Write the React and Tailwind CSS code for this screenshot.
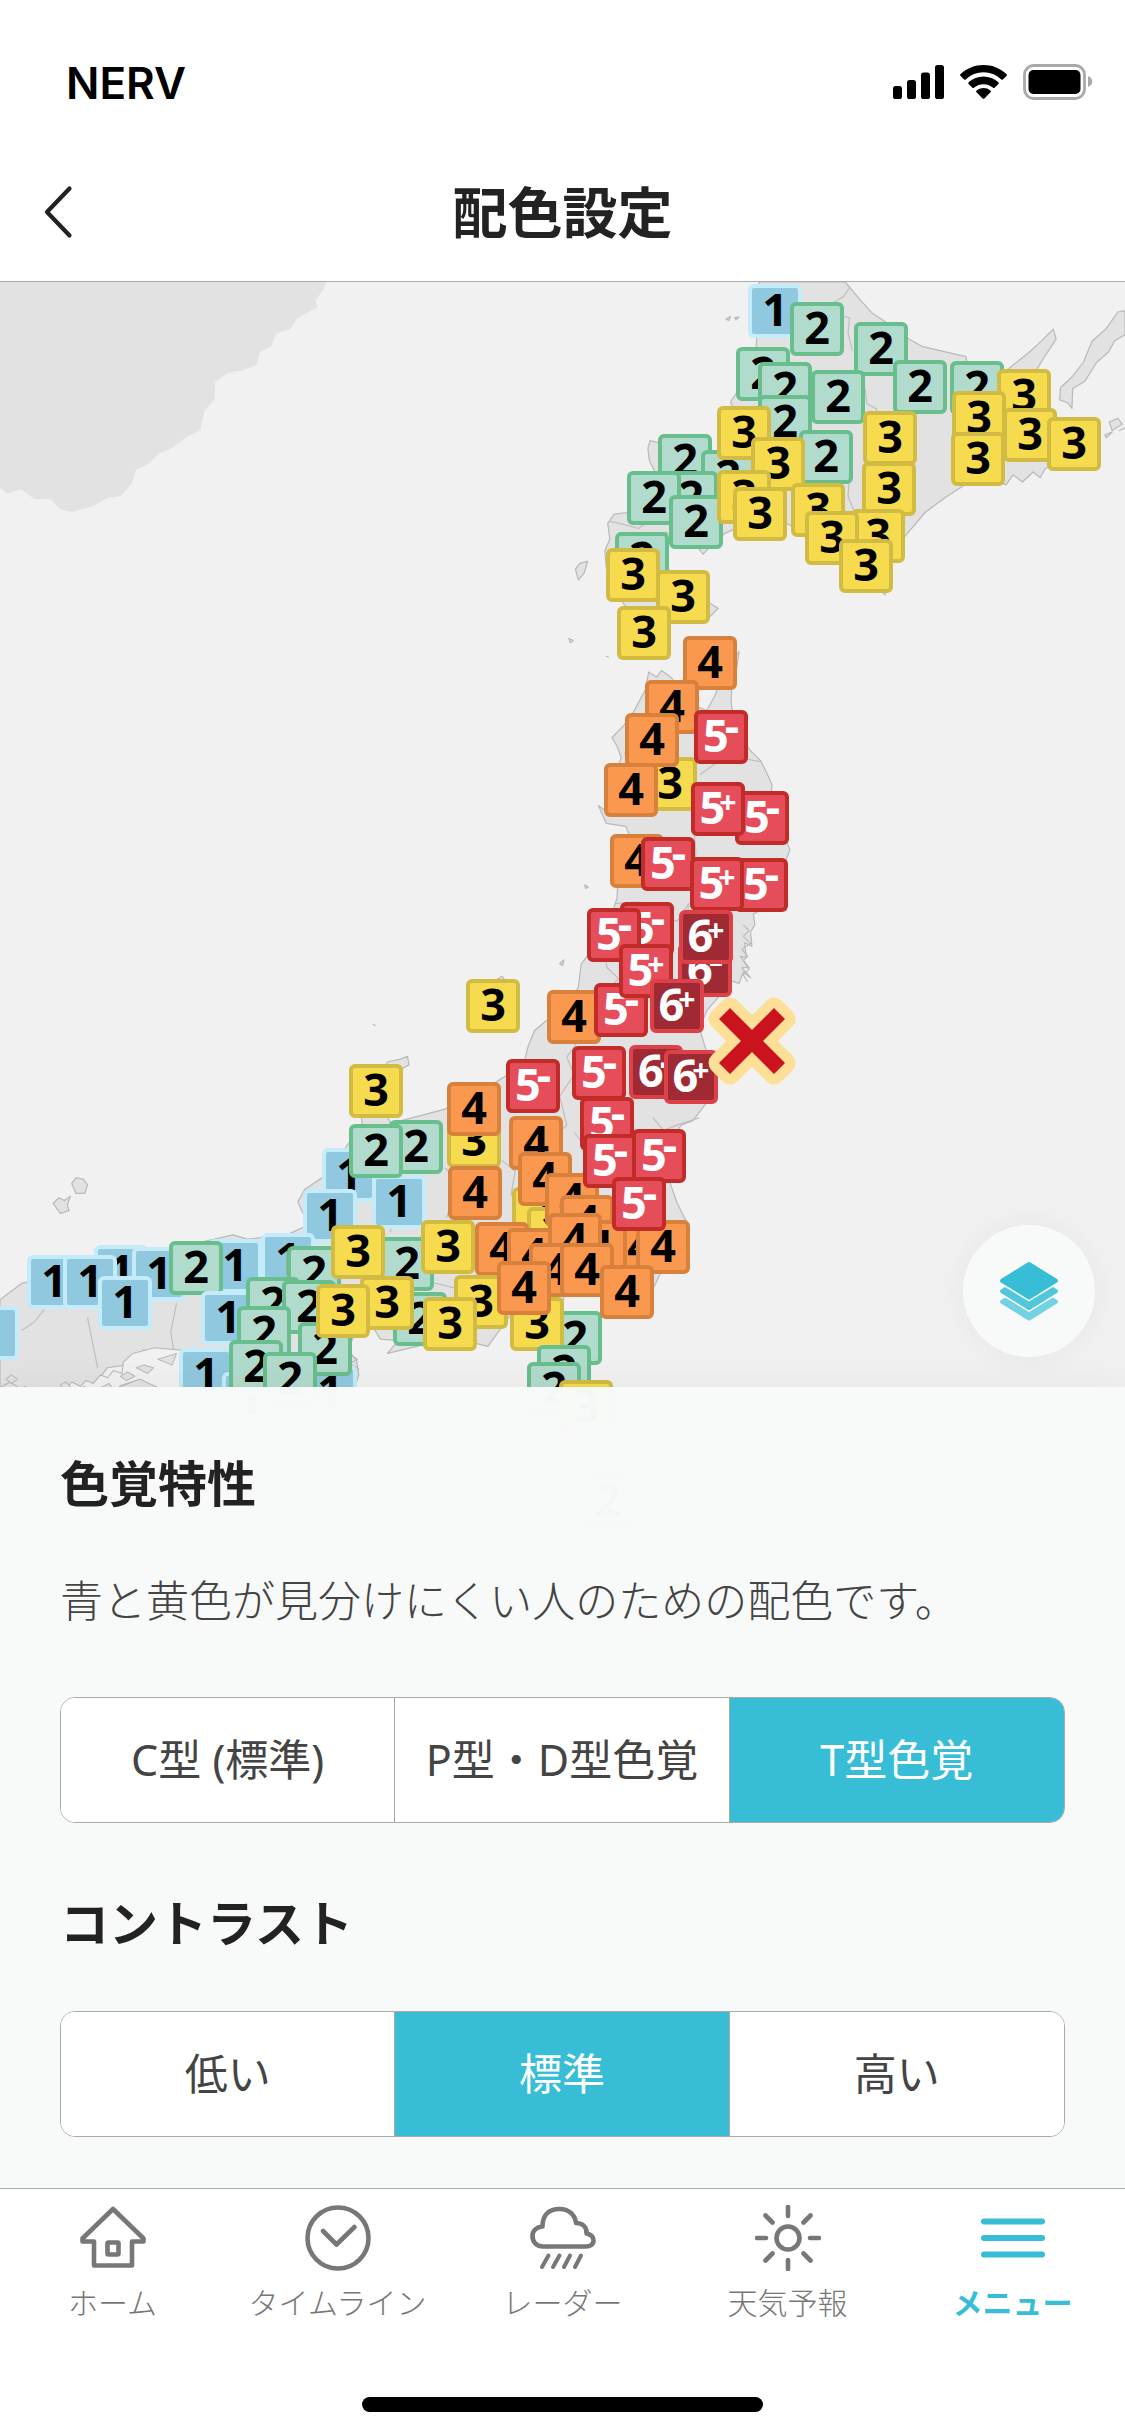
import { useState } from "react";

const TILE_STYLES = {
  1: "bg-[#90c8df] border-[#c3ebfa] text-black",
  2: "bg-[#b1dbcd] border-[#68be8d] text-black",
  3: "bg-[#f5db4d] border-[#d2bb43] text-black",
  4: "bg-[#fa9850] border-[#d7813c] text-black",
  5: "bg-[#e64d5b] border-[#c12b28] text-white",
  6: "bg-[#a02a33] border-[#dd4046] text-white",
};

// Seismic intensity readings in drawing order: [intensity, x, y] in map pixels.
const READINGS = [
  ["1", 748, 2], ["2", 736, 65], ["2", 758, 80], ["2", 790, 20], ["2", 854, 40],
  ["2", 811, 88], ["2", 758, 113], ["2", 893, 78], ["2", 950, 79], ["3", 997, 87],
  ["3", 952, 109], ["3", 1003, 126], ["3", 951, 150], ["3", 1047, 135],
  ["2", 658, 152], ["2", 701, 168], ["2", 664, 189], ["2", 627, 189], ["2", 669, 213],
  ["2", 799, 148], ["3", 717, 124], ["3", 751, 155], ["3", 717, 188], ["3", 733, 205],
  ["3", 863, 129], ["3", 862, 180], ["3", 791, 201], ["3", 851, 227], ["3", 805, 229],
  ["3", 839, 257], ["2", 615, 250], ["3", 656, 288], ["3", 606, 266], ["3", 617, 324],
  ["4", 683, 354], ["4", 645, 398], ["3", 643, 475], ["4", 625, 431], ["4", 604, 481],
  ["5-", 694, 428], ["5-", 735, 509], ["5+", 691, 500], ["4", 610, 552], ["5-", 641, 555],
  ["5-", 734, 576], ["5+", 690, 575], ["5-", 620, 620], ["5-", 587, 626],
  ["6-", 678, 661], ["6+", 679, 628], ["4", 547, 708], ["5-", 594, 701],
  ["5+", 619, 662], ["6+", 650, 697], ["3", 466, 697], ["5-", 506, 777],
  ["5-", 572, 764], ["6-", 629, 763], ["6+", 664, 768],
  ["1", 322, 866], ["1", 372, 893], ["2", 389, 838], ["2", 349, 842], ["3", 349, 782],
  ["1", 303, 907], ["3", 447, 832], ["4", 447, 800], ["4", 448, 884],
  ["3", 512, 905], ["3", 527, 925], ["4", 509, 834], ["4", 518, 870], ["4", 545, 891],
  ["4", 560, 913], ["4", 613, 938], ["4", 636, 938], ["4", 573, 938],
  ["4", 475, 940], ["4", 507, 946], ["4", 548, 931],
  ["5-", 580, 815], ["5-", 583, 852], ["5-", 632, 847], ["5-", 612, 895],
  ["1", -35, 1024], ["1", 94, 963], ["1", 27, 973], ["1", 63, 973], ["1", 132, 965],
  ["1", 98, 994], ["1", 208, 957], ["2", 169, 959], ["1", 261, 951], ["1", 201, 1009],
  ["2", 287, 964], ["2", 380, 955], ["3", 331, 943], ["3", 421, 938],
  ["2", 246, 995], ["2", 282, 998], ["2", 237, 1024], ["1", 303, 1083], ["2", 298, 1040],
  ["2", 393, 1010], ["3", 360, 994], ["3", 316, 1002], ["3", 454, 993], ["3", 423, 1015],
  ["2", 548, 1029], ["3", 510, 1015], ["4", 529, 961], ["4", 560, 961],
  ["4", 497, 979], ["4", 600, 983], ["1", 179, 1066], ["1", 222, 1090], ["2", 229, 1058],
  ["2", 263, 1070], ["2", 537, 1063], ["2", 527, 1080], ["3", 559, 1098], ["2", 581, 1192],
];

function Tile({ value, x, y }) {
  const digit = value[0];
  const sign = value[1];
  return (
    <span
      className={`absolute flex h-[54px] w-[54px] justify-center rounded-[6px] border-4 text-[45px] leading-[42px] font-bold ${TILE_STYLES[digit]}`}
      style={{ left: x, top: y }}
    >
      {digit}
      {sign === "-" && <span className="-ml-[4px] leading-[22px]">-</span>}
      {sign === "+" && <span className="-ml-[6px] text-[30px] leading-[32px]">+</span>}
    </span>
  );
}

function Land() {
  return (
    <svg className="absolute top-0 left-0" width="1125" height="1200" viewBox="0 0 1125 1200" fill="none" aria-hidden="true">
      <g transform="scale(.7175 .7143)" strokeLinejoin="round">
        <path fill="#e2e2e2" d="M0 0H455L450 12 440 25 442 36 415 50 404 66 385 72 378 90 362 98 358 116 338 124 318 127 300 140 299 165 285 180 279 208 262 216 240 232 222 240 205 256 190 262 184 282 168 300 150 302 130 314 100 322 84 318 70 304 48 304 30 290 10 296 0 288Z" />
        <g fill="#e2e2e2" stroke="#b9b9b9" strokeWidth="1.7">
          <path d="M1058 0H1178L1198 24 1215 43 1240 60 1258 75 1285 90 1310 96 1340 103 1346 104 1349 118 1380 122 1395 130 1392 160 1400 200 1500 210 1478 248 1456 262 1450 274 1440 266 1425 280 1412 270 1402 284 1385 276 1345 284 1320 300 1290 322 1262 355 1240 390 1228 424 1234 438 1200 410 1172 385 1158 364 1120 350 1090 335 1050 335 1010 352 992 368 980 381 973 372 950 366 928 350 918 362 930 400 950 425 978 440 988 449 1001 457 990 468 975 475 935 478 895 488 880 466 862 440 845 400 843 376 850 360 847 338 856 325 880 322 905 300 915 270 905 250 903 233 906 222 930 228 965 240 1000 242 1017 220 1024 180 1018 168 1030 150 1046 140 1054 90Z" />
          <path d="M1392 132 1410 118 1436 97 1452 82 1468 66 1472 80 1455 106 1446 121 1425 135Z" />
          <path d="M1568 40 1558 42 1542 65 1522 83 1510 112 1495 132 1478 148 1477 165 1488 169 1494 177 1495 149 1512 139 1528 113 1545 98 1554 82 1568 74Z" />
          <path d="M1546 196 1558 191 1564 199 1550 208ZM1540 214 1550 210 1542 218ZM1012 52 1018 48 1016 54ZM1024 50 1030 49 1026 53ZM1568 204 1560 208Z" />
          <path d="M802 402 808 394 819 391 814 408 806 417ZM793 499 799 502 795 505ZM845 524 848 525ZM815 844 820 847 816 849ZM780 954 786 949 784 957ZM520 1039 523 1041ZM692 977 700 972 704 978Z" />
          <path d="M904 546 915 553 922 544 936 554 944 570 960 590 985 600 996 580 1010 545 1030 517 1027 540 1020 555 1019 590 1025 625 1045 655 1060 670 1069 688 1076 704 1072 740 1095 780 1101 795 1093 815 1095 860 1050 885 1052 900 1046 910 1048 930 1038 925 1040 946 1032 944 1044 960 1034 960 1046 974 1036 966 1030 982 1018 978 1004 998 985 1020 975 1045 984 1075 985 1115 984 1150 966 1174 950 1180 934 1200 930 1250 944 1290 958 1318 944 1340 922 1385 905 1420 892 1450 880 1447 868 1425 860 1405 820 1400 795 1395 780 1440 755 1465 735 1440 718 1438 705 1455 680 1490 640 1480 590 1488 540 1500 555 1482 530 1480 512 1450 500 1460 485 1495 497 1510 500 1530 488 1568H250L245 1556 210 1568H330L300 1530 250 1500 200 1495 185 1515 150 1520 130 1545 60 1550 40 1568H0V1425L30 1402 70 1392 110 1378 150 1362 220 1358 290 1342 325 1334 345 1340 400 1334 430 1320 415 1288 425 1270 455 1250 490 1200 505 1180 500 1140 528 1110 540 1092 558 1088 568 1084 570 1096 556 1104 540 1120 530 1150 545 1178 590 1166 620 1158 660 1140 715 1105 730 1095 736 1070 745 1048 790 1010 806 988 810 955 832 925 850 895 860 862 862 820 880 780 872 762 845 758 834 733 846 742 862 730 868 700 860 680 866 666 860 650 853 638 870 620 884 600 900 570Z" />
          <path d="M100 1262 106 1254 116 1256 122 1264 118 1276 106 1276ZM74 1290 82 1282 90 1286 98 1280 94 1292 96 1300 84 1304Z" />
          <path d="M150 1568 165 1548 195 1535 225 1545 240 1568ZM0 1548 14 1540 32 1552 40 1568H0Z" />
        </g>
        <path fill="#f1f1f1" stroke="#b9b9b9" strokeWidth="1.5" d="M185 1500 215 1492 260 1496 330 1505 322 1540 280 1545 250 1568 225 1550 195 1536 168 1545 150 1564 60 1568 66 1558 75 1560 80 1548 90 1552 100 1540 112 1546 120 1538 130 1542 140 1530 150 1534 158 1524 170 1528 172 1512Z" />
        <path stroke="#bcbcbc" strokeWidth="1.500" fill="#e2e2e2" d="M190 1520 200 1516 214 1520 206 1528ZM220 1508 246 1500 240 1516ZM168 1532 178 1526 188 1532 176 1538ZM140 1548 152 1542 158 1550 146 1556ZM104 1552 118 1546 124 1556 110 1562ZM84 1544 92 1540 98 1546 90 1552ZM266 1512 280 1508 290 1514 274 1520ZM8 1536 16 1530 24 1536 16 1542ZM28 1550 36 1546 42 1552 34 1556ZM126 1556 134 1552 138 1560 130 1562Z" />
        <g stroke="#bdbdbd" strokeWidth="1.6">
          <path d="M1184 8 1176 20 1160 30 1166 46 1184 50 1182 72 1188 96M1206 150 1208 170 1222 178 1224 200 1216 214M1170 210 1186 232 1182 300 1190 320M850 335 872 340 890 345 920 322M870 660 900 655 930 670 975 672M975 690 1000 672 1040 668 1062 672M965 740 970 800 962 850M858 870 890 868 920 890 944 895 960 870 950 940 955 990" />
          <path d="M842 940 846 960 862 975 840 1000M808 1060 790 1085 800 1110 780 1140 790 1180 770 1200M910 1170 925 1188 944 1180 975 1170M800 1190 830 1230 815 1260M700 1230 718 1245 712 1280M620 1240 640 1260 622 1310M536 1290 550 1310 544 1330M600 1330 620 1350 600 1370M122 1450 130 1490 136 1520M246 1430 238 1470 242 1495M62 1438 48 1456 30 1468M600 1400 640 1410 630 1430M730 1250 735 1300 720 1340" />
        </g>
        <g stroke="#b9b9b9" strokeWidth="1.5" fill="none">
          <path d="M1036 900 1044 908 1036 916 1046 926 1034 934 1042 944 1036 950 1044 962 1036 970 1042 980M486 1500 498 1508 488 1514 500 1522 486 1530 496 1540M188 1364 200 1358 210 1364 220 1358M740 1330 756 1324 760 1334" />
        </g>
      </g>
    </svg>
  );
}

function Epicenter() {
  const cross = "M-22 -33 0 -11 22 -33 33 -22 11 0 33 22 22 33 0 11 -22 33 -33 22 -11 0 -33 -22Z";
  return (
    <svg className="absolute top-[715px] left-[708px]" width="88" height="88" viewBox="-44 -44 88 88" role="img" aria-label="震源">
      <path d={cross} fill="#fedf98" stroke="#fedf98" strokeWidth="21" strokeLinejoin="round" />
      <path d={cross} fill="#cb131d" />
    </svg>
  );
}

function SeismicMap() {
  return (
    <div className="absolute inset-0 overflow-hidden bg-[#f1f1f1]">
      <Land />
      {READINGS.map(([value, x, y], i) => (
        <Tile key={i} value={value} x={x} y={y} />
      ))}
      <Epicenter />
    </div>
  );
}

function StatusBar() {
  return (
    <div className="flex h-[132px] items-center justify-between pt-[32px] pr-[32px] pl-[66px]">
      <span className="pt-[2px] font-['Inter',sans-serif] text-[44px] leading-[50px] font-semibold text-black">NERV</span>
      <div className="flex items-center gap-[16px]">
        <svg width="51" height="34" viewBox="0 0 51 34" aria-hidden="true">
          <rect x="0" y="21" width="9" height="13" rx="2.6" />
          <rect x="14" y="15" width="9" height="19" rx="2.6" />
          <rect x="28" y="7.500" width="9" height="26.500" rx="2.600" />
          <rect x="42" y="0" width="9" height="34" rx="2.6" />
        </svg>
        <svg width="47" height="34" viewBox="0 0 47 34" aria-hidden="true">
          <path d="M23.500 0C14.600 0 6.600 3.400.6 9a1.400 1.400 0 0 0 0 2l3.300 3.300a1.400 1.400 0 0 0 2 0 25.500 25.500 0 0 1 35.200 0 1.400 1.400 0 0 0 2 0L46.400 11a1.400 1.400 0 0 0 0-2C40.400 3.400 32.400 0 23.500 0Z" />
          <path d="M23.500 11.500c-5.600 0-10.700 2.200-14.700 5.600a1.400 1.400 0 0 0 0 2.100l3.400 3.400a1.400 1.400 0 0 0 2 0 14.200 14.200 0 0 1 18.600 0 1.400 1.400 0 0 0 2 0l3.400-3.400a1.400 1.400 0 0 0 0-2.100c-4-3.400-9.100-5.600-14.700-5.600Z" />
          <path d="M23.500 23c-2.600 0-5 .9-6.900 2.400-.6.500-.6 1.400-.1 1.900l6.100 6.100c.5.500 1.300.5 1.800 0l6.100-6.100c.5-.5.500-1.400-.1-1.900A11 11 0 0 0 23.500 23Z" />
        </svg>
        <svg width="70" height="36" viewBox="0 0 70 36" aria-hidden="true">
          <rect x="1.500" y="1.500" width="60" height="33" rx="9" fill="none" stroke="#a9a9a9" strokeWidth="2.800" />
          <rect x="5.500" y="6" width="52" height="24" rx="5" />
          <path d="M65 12c2.800 1 4.200 3 4.200 5.500S67.800 22 65 23Z" fill="#a9a9a9" />
        </svg>
      </div>
    </div>
  );
}

function Segmented({ labelId, options, initial }) {
  const [selected, setSelected] = useState(initial);
  return (
    <div
      role="group"
      aria-labelledby={labelId}
      className="grid grid-cols-3 divide-x divide-[#aaaaaa] overflow-hidden rounded-[15px] border border-[#aaaaaa] bg-white"
    >
      {options.map((option) => (
        <button
          key={option}
          type="button"
          aria-pressed={selected === option}
          onClick={() => setSelected(option)}
          className={`h-[124px] text-[43px] leading-[60px] ${selected === option ? "bg-[#38bdd6] text-white" : "bg-white text-[#444444]"}`}
        >
          {option}
        </button>
      ))}
    </div>
  );
}

const TABS = [
  {
    label: "ホーム",
    icon: (
      <>
        <path d="M33 4 2.500 33.500V36.500H14V60.500H52V36.500H63.500V33.500Z" />
        <rect x="27.500" y="37.500" width="11" height="12" rx="1" />
      </>
    ),
  },
  {
    label: "タイムライン",
    icon: (
      <>
        <circle cx="33" cy="33" r="30.500" />
        <path d="M18 26 31.500 39.500 49.500 22" />
      </>
    ),
  },
  {
    label: "レーダー",
    icon: (
      <>
        <path d="M13 41.500C6 41.500 2.500 36.500 2.500 31 2.500 25.500 6.500 22 12.500 21.500 12.500 10 19 4 29.500 4 38.500 4 45 9.500 46 18 53 18 57 22.500 56.500 28.500 61 29.500 63.500 32 63.500 35.500 63.500 39.500 60.500 41.500 56 41.500Z" />
        <path strokeWidth="4" d="M18.500 50.500 12 62M29.500 50.500 23 62M40 50.500 34 62M51 50.500 45 62" />
      </>
    ),
  },
  {
    label: "天気予報",
    icon: (
      <>
        <circle cx="33" cy="33" r="11.500" />
        <path d="M33 2V11M33 55V64M2 33H11M55 33H64M10.500 10.500 17.500 17.500M48.500 48.500 55.500 55.500M10.500 55.500 17.500 48.500M48.500 17.500 55.500 10.500" />
      </>
    ),
  },
  { label: "メニュー", active: true, icon: <path strokeWidth="6" d="M4 16.500H62M4 33H62M4 49.500H62" /> },
];

export default function App() {
  return (
    <div className="flex min-h-screen flex-col bg-white font-['Noto_Sans','Noto_Sans_CJK_JP',sans-serif]" lang="ja">
      <header className="border-b border-[#aaaaaa] bg-white">
        <StatusBar />
        <div className="grid h-[149px] grid-cols-[1fr_auto_1fr] items-center pb-[4px]">
          <button type="button" aria-label="戻る" className="flex h-[120px] w-[120px] items-center pt-[14px] pl-[42px]">
            <svg width="32" height="54" viewBox="0 0 32 54" fill="none" stroke="#222" strokeWidth="4.200" strokeLinecap="round" strokeLinejoin="round" aria-hidden="true">
              <path d="M27.500 3.500 5 27 27.500 50.500" />
            </svg>
          </button>
          <h1 className="pt-[14px] text-[55px] leading-[80px] font-bold text-[#222222]">配色設定</h1>
        </div>
      </header>

      <main className="relative flex flex-1 flex-col">
        <SeismicMap />
        <div className="relative flex min-h-[400px] flex-1 items-end justify-end p-[30px]">
          <button
            type="button"
            aria-label="レイヤー"
            className="flex h-[132px] w-[132px] items-center justify-center rounded-full bg-[#f8faf9] shadow-[0_0_30px_rgba(60,50,30,0.06)]"
          >
            <svg width="58" height="59" viewBox="0 0 58 59" aria-hidden="true">
              <path fill="#73d2e2" d="M5 35.500 29 50 53 35.500 57 38Q59 39.500 57 41.500L30.500 58Q29 59 27.500 58L1 41.500Q-1 39.500 1 38Z" />
              <path fill="#52c7db" d="M5 25 29 39.500 53 25 57 27.500Q59 29 57 31L30.500 47.500Q29 48.500 27.500 47.500L1 31Q-1 29 1 27.500Z" />
              <path fill="#38bdd6" d="M27.500.5Q29-.5 30.500.5L57 17Q59 18.500 57 20.500L30.500 37Q29 38 27.500 37L1 20.500Q-1 18.500 1 17Z" />
            </svg>
          </button>
        </div>

        <section className="relative bg-[#f8faf9]/99 px-[60px] pt-[60px] pb-[51px] shadow-[0_0_40px_rgba(60,50,30,0.06)]">
          <h2 id="vision" className="text-[49px] leading-[72px] font-bold text-[#222222]">色覚特性</h2>
          <p className="mt-[52px] mb-[66px] text-[43px] leading-[60px] font-light text-[#444444]">
            青と黄色が見分けにくい人のための配色です。
          </p>
          <Segmented labelId="vision" options={["C型 (標準)", "P型・D型色覚", "T型色覚"]} initial="T型色覚" />
          <h2 id="contrast" className="mt-[64px] mb-[52px] text-[49px] leading-[72px] font-bold text-[#222222]">コントラスト</h2>
          <Segmented labelId="contrast" options={["低い", "標準", "高い"]} initial="標準" />
        </section>
      </main>

      <footer className="relative border-t border-[#aaaaaa] bg-white pb-[24px]">
        <nav className="grid grid-cols-5 pt-[16px]">
          {TABS.map(({ label, icon, active }) => (
            <a
              key={label}
              href="#"
              aria-current={active ? "page" : undefined}
              className={`flex flex-col items-center gap-[12px] text-[30px] leading-[40px] ${active ? "font-bold text-[#38bdd6]" : "font-light text-[#777777]"}`}
            >
              <svg width="66" height="66" viewBox="0 0 66 66" fill="none" stroke="currentColor" strokeWidth="4.600" strokeLinecap="round" strokeLinejoin="round" aria-hidden="true">
                {icon}
              </svg>
              {label}
            </a>
          ))}
        </nav>
        <div className="mx-auto mt-[74px] h-[15px] w-[401px] rounded-full bg-black" />
      </footer>
    </div>
  );
}
